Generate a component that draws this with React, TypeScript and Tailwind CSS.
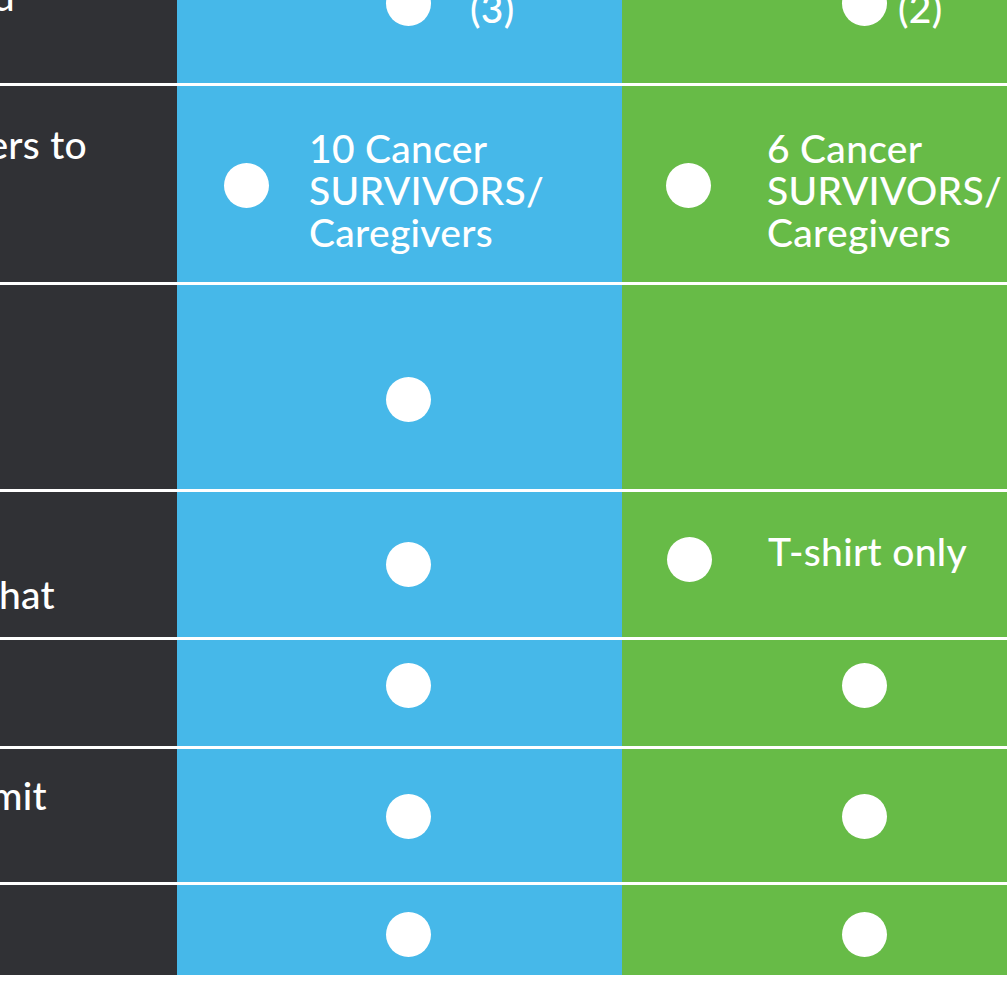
const Dot = ({ className = '' }: { className?: string }) => (
  <span className={`block w-[45px] h-[45px] rounded-full bg-white shrink-0 ${className}`} />
);

// label lines are cut by the left edge, so each visible line is pinned by its end
const Label = ({ text, className }: { text: string; className: string }) => (
  <div className={`flex justify-end whitespace-nowrap ${className}`}>
    <span>{text}</span>
  </div>
);

export default function App() {
  return (
    <div className="w-[1007px] h-[1003px] overflow-hidden bg-white text-white font-['Lato',sans-serif] font-medium text-[39px] leading-[42px] tracking-[0.3px]">
      {/* row 0 - mostly scrolled off the top */}
      <div className="flex h-[86px] border-b-[3px] border-white">
        <div className="w-[177px] shrink-0 bg-[#303135] overflow-hidden flex flex-col justify-end pb-[66px]">
          <Label text="Sponsor name verbally recognized" className="pr-[162px]" />
        </div>
        <div className="w-[445px] shrink-0 bg-[#46b8e9] flex items-end pb-[57px] pl-[209px] gap-[39px]">
          <Dot />
          <span className="-mb-[3px]">(3)</span>
        </div>
        <div className="flex-1 bg-[#67bb47] flex items-end pb-[57px] pl-[220px] gap-[11px]">
          <Dot />
          <span className="-mb-[3px]">(2)</span>
        </div>
      </div>

      {/* row 1 */}
      <div className="flex h-[199px] border-b-[3px] border-white">
        <div className="w-[177px] shrink-0 bg-[#303135] overflow-hidden pt-[37px]">
          <Label text="Sponsor survivors and caregivers to" className="pr-[90px]" />
        </div>
        <div className="w-[445px] shrink-0 bg-[#46b8e9] flex items-start pt-[41px] pl-[47px] gap-[40px]">
          <Dot className="mt-[36px]" />
          <p>
            10 Cancer
            <br />
            SURVIVORS/
            <br />
            Caregivers
          </p>
        </div>
        <div className="flex-1 bg-[#67bb47] flex items-start pt-[41px] pl-[44px] gap-[56px]">
          <Dot className="mt-[36px]" />
          <p>
            6 Cancer
            <br />
            SURVIVORS/
            <br />
            Caregivers
          </p>
        </div>
      </div>

      {/* row 2 */}
      <div className="flex h-[207px] border-b-[3px] border-white">
        <div className="w-[177px] shrink-0 bg-[#303135]" />
        <div className="w-[445px] shrink-0 bg-[#46b8e9] pt-[92px] pl-[209px]">
          <Dot />
        </div>
        <div className="flex-1 bg-[#67bb47]" />
      </div>

      {/* row 3 */}
      <div className="flex h-[148px] border-b-[3px] border-white">
        <div className="w-[177px] shrink-0 bg-[#303135] overflow-hidden pt-[81px]">
          <Label text="Team t-shirts and swag items that" className="pr-[122px]" />
        </div>
        <div className="w-[445px] shrink-0 bg-[#46b8e9] pt-[50px] pl-[209px]">
          <Dot />
        </div>
        <div className="flex-1 bg-[#67bb47] flex items-start pt-[38px] pl-[45px] gap-[56px]">
          <Dot className="mt-[7px]" />
          <span>T-shirt only</span>
        </div>
      </div>

      {/* row 4 */}
      <div className="flex h-[109px] border-b-[3px] border-white">
        <div className="w-[177px] shrink-0 bg-[#303135]" />
        <div className="w-[445px] shrink-0 bg-[#46b8e9] pt-[23px] pl-[209px]">
          <Dot />
        </div>
        <div className="flex-1 bg-[#67bb47] pt-[23px] pl-[220px]">
          <Dot />
        </div>
      </div>

      {/* row 5 */}
      <div className="flex h-[136px] border-b-[3px] border-white">
        <div className="w-[177px] shrink-0 bg-[#303135] overflow-hidden pt-[25px]">
          <Label text="Invitation to the annual Summit" className="pr-[130px]" />
        </div>
        <div className="w-[445px] shrink-0 bg-[#46b8e9] pt-[45px] pl-[209px]">
          <Dot />
        </div>
        <div className="flex-1 bg-[#67bb47] pt-[45px] pl-[220px]">
          <Dot />
        </div>
      </div>

      {/* row 6 */}
      <div className="flex h-[90px]">
        <div className="w-[177px] shrink-0 bg-[#303135]" />
        <div className="w-[445px] shrink-0 bg-[#46b8e9] pt-[27px] pl-[209px]">
          <Dot />
        </div>
        <div className="flex-1 bg-[#67bb47] pt-[27px] pl-[220px]">
          <Dot />
        </div>
      </div>
    </div>
  );
}
